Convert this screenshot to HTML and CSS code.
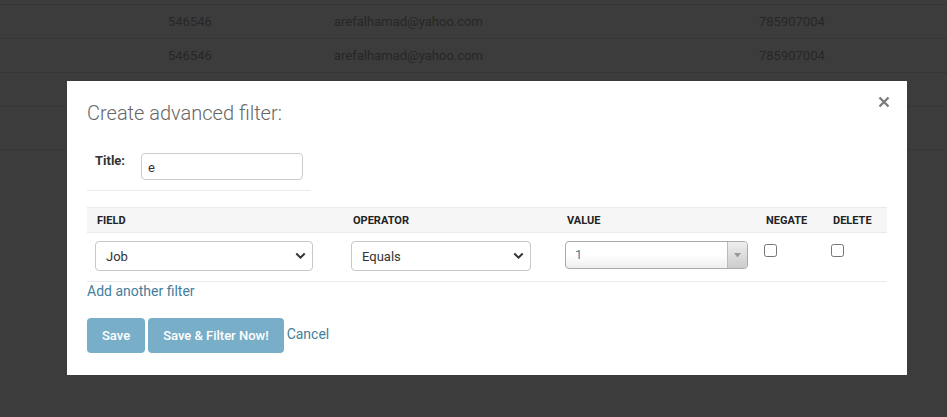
FILE: index.html
```html
<!DOCTYPE html>
<html>
<head>
<meta charset="utf-8">
<link rel="stylesheet" href="styles.css">
</head>
<body>
<div class="page">
  <div class="bg-row bg-row-top"></div>
  <div class="bg-row"><span>546546</span><span>arefalhamad@yahoo.com</span><span>785907004</span></div>
  <div class="bg-row"><span>546546</span><span>arefalhamad@yahoo.com</span><span>785907004</span></div>
  <div class="bg-row"><span></span><span></span><span></span></div>
  <div class="bg-row bg-row-tall"><span></span><span></span><span></span></div>
</div>

<div class="modal">
  <div class="modal-head">
    <h2 class="modal-title">Create advanced filter:</h2>
    <button class="close" aria-label="Close">
      <svg width="12" height="12" viewBox="0 0 12 12"><path d="M1.5 1.5 L10.5 10.5 M10.5 1.5 L1.5 10.5" stroke="#7b7b7b" stroke-width="2.4" stroke-linecap="butt" fill="none"/></svg>
    </button>
  </div>

  <div class="title-row">
    <label class="title-label">Title:</label>
    <input class="title-input" type="text" value="e">
  </div>
  <div class="title-rule"></div>

  <table class="filters">
    <colgroup>
      <col class="c-field"><col class="c-op"><col class="c-val"><col class="c-neg"><col class="c-del">
    </colgroup>
    <thead>
      <tr><th>Field</th><th>Operator</th><th>Value</th><th>Negate</th><th>Delete</th></tr>
    </thead>
    <tbody>
      <tr>
        <td><div class="select w-field"><span>Job</span><svg width="11" height="8" viewBox="0 0 11 8"><path d="M1.3 1.5 L5.5 5.7 L9.7 1.5" stroke="#333" stroke-width="2" fill="none"/></svg></div></td>
        <td><div class="select w-op"><span>Equals</span><svg width="11" height="8" viewBox="0 0 11 8"><path d="M1.3 1.5 L5.5 5.7 L9.7 1.5" stroke="#333" stroke-width="2" fill="none"/></svg></div></td>
        <td><div class="s2"><span class="s2-text">1</span><span class="s2-arrow"><svg width="7" height="5" viewBox="0 0 7 5"><path d="M0 0 H7 L3.5 4.5 Z" fill="#999"/></svg></span></div></td>
        <td><input type="checkbox" class="chk"></td>
        <td><input type="checkbox" class="chk"></td>
      </tr>
    </tbody>
  </table>

  <a class="add-link" href="#">Add another filter</a>

  <div class="actions">
    <button class="btn">Save</button>
    <button class="btn">Save &amp; Filter Now!</button>
    <a class="cancel" href="#">Cancel</a>
  </div>
</div>
</body>
</html>
```

FILE: styles.css
```css
* { box-sizing: border-box; }
html, body { margin: 0; padding: 0; }
body {
  width: 947px;
  height: 417px;
  background: #3c3c3c;
  font-family: Roboto, "Liberation Sans", sans-serif;
  color: #333;
  overflow: hidden;
  position: relative;
}

.page { width: 100%; }
.bg-row {
  display: grid;
  grid-template-columns: 168px 166px 425px 1fr;
  align-items: center;
  height: 34px;
  border-bottom: 1px solid #353535;
  font-size: 13px;
  color: #272727;
}
.bg-row span:first-child { grid-column: 2; }
.bg-row-top { height: 5px; }
.bg-row-tall { height: 43px; }

.modal {
  position: absolute;
  left: 67px;
  top: 81px;
  width: 840px;
  height: 294px;
  background: #fff;
  padding: 18px 20px 0 20px;
}

.modal-head {
  display: flex;
  justify-content: space-between;
  align-items: flex-start;
}
.modal-title {
  margin: 0;
  font-weight: 300;
  font-size: 20px;
  line-height: 28px;
  color: #666;
}
.close {
  border: 0;
  background: none;
  padding: 0;
  margin: -3px -3px 0 0;
  width: 12px;
  height: 12px;
  display: block;
}
.close svg { display: block; }

.title-row {
  display: flex;
  align-items: flex-start;
  margin-top: 26px;
  padding-left: 8px;
}
.title-label {
  font-weight: 700;
  font-size: 13px;
  color: #333;
  width: 46px;
  line-height: 16px;
  padding-top: 0;
}
.title-input {
  width: 162px;
  height: 27px;
  border: 1px solid #ccc;
  border-radius: 4px;
  font-family: Roboto, "Liberation Sans", sans-serif;
  font-size: 13px;
  padding: 1px 6px 0;
  color: #333;
  margin: 0;
}
.title-rule {
  width: 224px;
  height: 1px;
  background: #eaeaea;
  margin-top: 10px;
}

.filters {
  margin-top: 16px;
  width: 800px;
  table-layout: fixed;
  border-collapse: collapse;
}
.c-field { width: 256px; }
.c-op { width: 214px; }
.c-val { width: 199px; }
.c-neg { width: 67px; }
.c-del { width: 64px; }

.filters th {
  background: #f6f6f6;
  border-top: 1px solid #eaeaea;
  border-bottom: 1px solid #eaeaea;
  text-align: left;
  text-transform: uppercase;
  font-size: 11px;
  font-weight: 700;
  color: #222;
  padding: 0 10px;
  height: 25px;
  line-height: 23px;
}
.filters td {
  padding: 8px 8px 10px;
  vertical-align: top;
  border-bottom: 1px solid #eaeaea;
}

.select {
  display: flex;
  align-items: center;
  justify-content: space-between;
  height: 30px;
  border: 1px solid #c8c8c8;
  border-radius: 4px;
  padding: 0 6px 0 10px;
  font-size: 13px;
  color: #333;
  background: #fff;
}
.select svg { display: block; }
.w-field { width: 218px; }
.w-op { width: 180px; }

.s2 {
  display: flex;
  width: 183px;
  height: 28px;
  border: 1px solid #aaa;
  border-radius: 4px;
  background: linear-gradient(#fff 50%, #eee);
  overflow: hidden;
}
.s2-text {
  flex: 1;
  padding-left: 9px;
  font-size: 13px;
  line-height: 26px;
  color: #447e9b;
}
.s2-arrow {
  width: 20px;
  border-left: 1px solid #bbb;
  background: linear-gradient(#eee, #ccc);
  display: flex;
  align-items: center;
  justify-content: center;
}
.s2-arrow svg { display: block; }

.chk {
  margin: 3px 0 0 0;
  width: 13px;
  height: 13px;
}

.add-link {
  display: block;
  margin-top: 0;
  font-size: 14px;
  line-height: 18px;
  color: #447e9b;
  text-decoration: none;
}

.actions {
  display: flex;
  align-items: center;
  gap: 3px;
  margin-top: 18px;
}
.btn {
  height: 35px;
  background: #79aec8;
  border: 0;
  border-radius: 4px;
  color: #fff;
  font-family: Roboto, "Liberation Sans", sans-serif;
  font-size: 13px;
  font-weight: 500;
  padding: 0 15px;
  margin: 0;
}
.cancel {
  font-size: 14px;
  color: #447e9b;
  text-decoration: none;
  margin-top: -4px;
}
```
